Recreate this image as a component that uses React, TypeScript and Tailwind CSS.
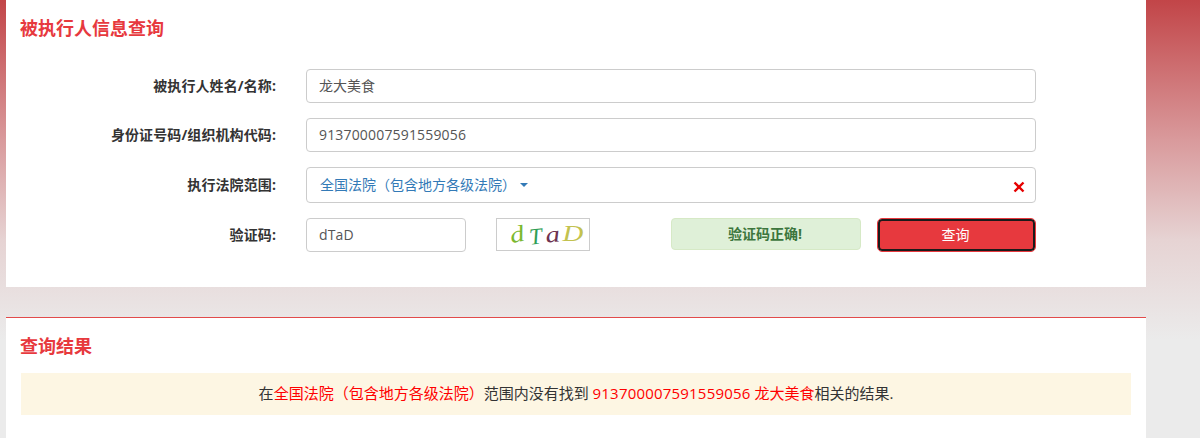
export default function App() {
  const label = "w-[276px] shrink-0 text-right text-[14px] tracking-[0.1px] font-bold text-[#333333] pb-[2px]";
  const input = "h-[34px] ml-[30px] pl-[12px] pb-[2px] flex items-center bg-white border border-[#cccccc] rounded-[4px] text-[14px] text-[#555555]";
  return (
    <div className="h-[438px] w-[1200px] overflow-hidden bg-[linear-gradient(180deg,#c24548_0px,#d99a9c_140px,#e6d3d3_240px,#ebebeb_340px)] font-['Open_Sans','Noto_Sans_CJK_SC',sans-serif]">
      <div className="ml-[6px] w-[1140px]">
        <section className="h-[287px] bg-white">
          <h2 className="pl-[14px] pt-[15px] h-[69px] text-[18px] leading-[26px] font-bold text-[#e7393e]">被执行人信息查询</h2>
          <div className="flex flex-col gap-[15px] -ml-[6px]">
            <div className="flex items-center">
              <div className={label}>被执行人姓名/名称:</div>
              <div className={`${input} w-[730px]`}>龙大美食</div>
            </div>
            <div className="flex items-center">
              <div className={label}>身份证号码/组织机构代码:</div>
              <div className={`${input} w-[730px] tracking-[0.17px]`}>913700007591559056</div>
            </div>
            <div className="flex items-center">
              <div className={label}>执行法院范围:</div>
              <div className="h-[36px] w-[730px] ml-[30px] pl-[13px] pr-[10px] flex items-center justify-between bg-white border border-[#cccccc] rounded-[4px]">
                <div className="flex items-center gap-[4px] pb-[1px] text-[14px] text-[#337ab7]">
                  <span>全国法院（包含地方各级法院）</span>
                  <span className="w-0 h-0 border-x-[4px] border-x-transparent border-t-[4px] border-t-[#337ab7]" />
                </div>
                <svg width="12" height="12" viewBox="0 0 12 12" className="mt-[3px]">
                  <path d="M1.5 1.5L10.5 10.5M10.5 1.5L1.5 10.5" stroke="#e60000" strokeWidth="2.4" />
                </svg>
              </div>
            </div>
            <div className="flex items-start">
              <div className={`${label} h-[34px] flex items-center justify-end`}>验证码:</div>
              <div className={`${input} w-[160px] tracking-[0.17px]`}>dTaD</div>
              <div className="ml-[30px] h-[33px] w-[94px] pl-[9px] border border-[#cccccc] bg-white flex items-center font-['Liberation_Serif',serif] italic text-[23px] leading-none overflow-hidden">
                <span className="w-[22px] text-center text-[#7cb82f] scale-x-125 -rotate-12">d</span>
                <span className="w-[15px] text-center text-[#2f9e55] translate-y-[2px] -rotate-6">T</span>
                <span className="w-[19px] text-center text-[#6e3350] scale-x-125 -rotate-6">a</span>
                <span className="w-[22px] text-center text-[#c3c24f] scale-x-125 -translate-y-[1px]">D</span>
              </div>
              <div className="ml-[81px] pb-[1px] pr-[2px] h-[32px] w-[190px] flex items-center justify-center bg-[#dff0d8] border border-[#d6e9c6] rounded-[4px] text-[14px] font-bold text-[#3c763d]">验证码正确!</div>
              <button className="ml-[17px] mt-[1px] pb-[1px] pr-[2px] h-[32px] w-[157px] flex items-center justify-center bg-[#e7393e] border-2 border-[#1a1a1a] outline outline-1 outline-[#e7393e] rounded-[4px] text-[14px] text-white">查询</button>
            </div>
          </div>
        </section>
        <section className="mt-[30px] h-[121px] border-t border-[#e24a4a] bg-white">
          <h2 className="pl-[14px] pt-[15px] h-[55px] text-[18px] leading-[26px] font-bold text-[#e7393e]">查询结果</h2>
          <div className="ml-[15px] w-[1110px] h-[42px] pb-[2px] flex items-center justify-center bg-[#fdf6e3] text-[15px] text-[#333333]">
            <span>在<span className="text-[#ff0000]">全国法院（包含地方各级法院）</span>范围内没有找到 <span className="text-[#ff0000]"><span className="tracking-[0.2px]">913700007591559056</span> 龙大美食</span>相关的结果.</span>
          </div>
        </section>
      </div>
    </div>
  );
}
